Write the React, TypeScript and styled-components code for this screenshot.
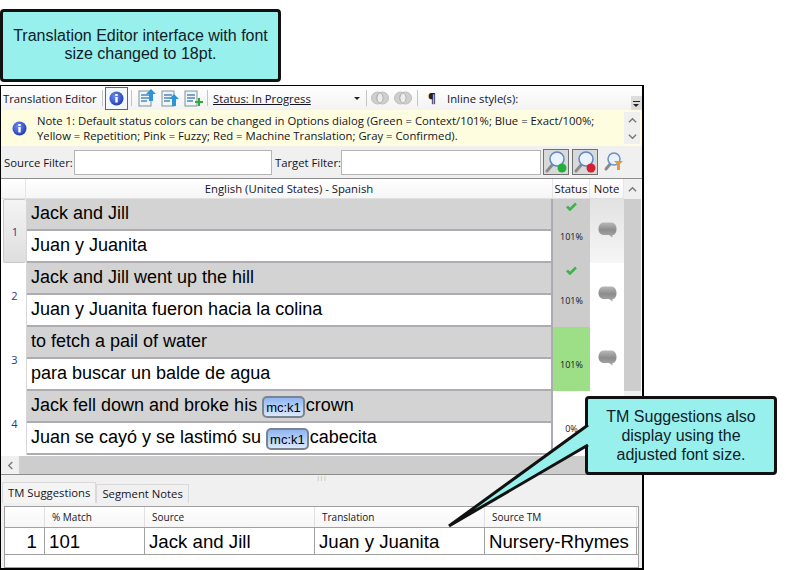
import React from "react";
import styled, { createGlobalStyle } from "styled-components";

const Global = createGlobalStyle`
  html, body { margin: 0; padding: 0; background: #fff; }
  body { font-family: "Open Sans", "Liberation Sans", sans-serif; color: #14141f; }
`;

const Page = styled.div`
  position: relative;
  width: 786px;
  height: 570px;
  overflow: hidden;
  padding-top: 9px;
  box-sizing: border-box;
`;

const Callout = styled.div`
  background: #98f0ec;
  border: 3px solid #111;
  border-radius: 4px;
  box-sizing: border-box;
  font-family: "Liberation Sans", Arial, sans-serif;
  font-size: 16px;
  color: #10202a;
  text-align: center;
  display: flex;
  align-items: center;
  justify-content: center;
`;

const TopCallout = styled(Callout)`
  width: 281px;
  height: 73px;
  padding: 0 10px 1px;
  line-height: 18px;
`;

const SideCallout = styled(Callout)`
  position: absolute;
  left: 585px;
  top: 396px;
  width: 192px;
  height: 79px;
  padding: 0 12px;
  line-height: 19px;
  z-index: 3;
`;

const Tail = styled.svg`
  position: absolute;
  left: 0;
  top: 0;
  z-index: 4;
  pointer-events: none;
`;

const Window = styled.div`
  width: 644px;
  height: 485px;
  margin-top: 3px;
  border: 1px solid #000;
  border-width: 1px 2px 2px 1px;
  box-sizing: border-box;
  background: #f0f0f0;
  display: flex;
  flex-direction: column;
`;

const Toolbar = styled.div`
  height: 24px;
  flex: none;
  background: linear-gradient(#ffffff, #f3f3f3);
  display: flex;
  align-items: center;
  font-size: 11.3px;
  padding-left: 2px;
  position: relative;
`;

const ToolLabel = styled.span`
  width: 97px;
  white-space: nowrap;
`;

const Sep = styled.i<{ $gap?: number }>`
  width: 1px;
  height: 16px;
  background: #c4c4c4;
  margin: 0 ${(p) => p.$gap ?? 4}px;
  flex: none;
`;

const InfoButton = styled.span`
  width: 23px;
  height: 23px;
  border: 1px solid #1a78c8;
  background: #f4f8fc;
  box-sizing: border-box;
  display: flex;
  align-items: center;
  justify-content: center;
  flex: none;
`;

const ToolIcon = styled.span`
  width: 23px;
  height: 20px;
  display: flex;
  align-items: center;
  justify-content: center;
  flex: none;
`;

const StatusPick = styled.span`
  width: 151px;
  display: flex;
  justify-content: space-between;
  align-items: center;
  padding: 0 2px;
  font-size: 11.3px;
  text-decoration: underline;
  box-sizing: border-box;
  white-space: nowrap;
  &::after {
    content: "";
    border: 3px solid transparent;
    border-top: 3px solid #222;
    margin-top: 3px;
  }
`;

const RingGroup = styled.span`
  display: flex;
  gap: 5px;
`;

const Pilcrow = styled.span`
  width: 18px;
  margin: 0 6px 0 0;
  text-align: center;
  font-size: 12px;
  font-weight: 700;
  color: #222;
`;

const Overflow = styled.span`
  position: absolute;
  right: 0;
  top: 10px;
  width: 11px;
  height: 14px;
  background: #dcdcdc;
  &::before {
    content: "";
    position: absolute;
    left: 2px;
    top: 5px;
    width: 7px;
    height: 1px;
    background: #222;
  }
  &::after {
    content: "";
    position: absolute;
    left: 2px;
    top: 8px;
    border: 3.5px solid transparent;
    border-top: 3.5px solid #222;
  }
`;

const NoteBar = styled.div`
  height: 36px;
  flex: none;
  background: #fefde0;
  display: flex;
  font-size: 11.3px;
  line-height: 15px;
`;

const NoteIcon = styled.span`
  width: 36px;
  flex: none;
  display: flex;
  justify-content: center;
  padding-top: 11px;
  box-sizing: border-box;
`;

const NoteText = styled.div`
  flex: 1;
  padding-top: 3px;
  white-space: nowrap;
`;

const NoteScroll = styled.div`
  width: 16px;
  height: 32px;
  margin: 2px 2px 0 0;
  flex: none;
  background: #f0f0f0;
  display: flex;
  flex-direction: column;
  align-items: center;
  justify-content: space-around;
`;

const FilterBar = styled.div`
  height: 33px;
  flex: none;
  display: flex;
  align-items: center;
  font-size: 11.3px;
  padding-left: 3px;
  border-bottom: 1px solid #8d8d8d;
  box-sizing: border-box;
`;

const FilterLabel = styled.span<{ $w: number }>`
  width: ${(p) => p.$w}px;
  flex: none;
  white-space: nowrap;
`;

const FilterInput = styled.span<{ $w: number }>`
  width: ${(p) => p.$w}px;
  height: 25px;
  border: 1px solid #b5b5b5;
  background: #fff;
  box-sizing: border-box;
  flex: none;
`;

const SearchBtn = styled.span<{ $gap: number }>`
  width: 26px;
  height: 26px;
  background: #d9d9d9;
  border: 1px solid #707070;
  box-sizing: border-box;
  margin-left: ${(p) => p.$gap}px;
  display: flex;
  align-items: center;
  justify-content: center;
  flex: none;
`;

const FilterIcon = styled(ToolIcon)`
  margin-left: 4px;
`;

const GridWrap = styled.div`
  flex: none;
  display: flex;
  background: #fff;
  height: 277px;
`;

const GridBody = styled.div`
  width: 623px;
  flex: none;
  display: flex;
  flex-direction: column;
`;

const HeadRow = styled.div`
  display: grid;
  grid-template-columns: 25px 527px 37px 34px;
  height: 20px;
  font-size: 11.3px;
  line-height: 19px;
  text-align: center;
  background: linear-gradient(#ffffff, #f6f6f6);
  border-bottom: 1px solid #e0e0e0;
  box-sizing: border-box;
`;

const HeadCell = styled.div`
  border-right: 1px solid #e6e6e6;
  white-space: nowrap;
`;

const SegRow = styled.div`
  display: grid;
  grid-template-columns: 25px 527px 37px 34px;
  height: 64px;
`;

const RowNum = styled.div<{ $active?: boolean }>`
  display: flex;
  align-items: center;
  justify-content: center;
  font-size: 11px;
  color: #1f3a8a;
  box-sizing: border-box;
  margin-left: 2px;
  ${(p) =>
    p.$active &&
    `background: linear-gradient(#f4f4f4, #dedede);
     border: 1px solid #c8c8c8;
     border-right: 0;
     border-radius: 2px;`}
`;

const Texts = styled.div`
  display: flex;
  flex-direction: column;
  border-left: 1px solid #d6d6d6;
`;

const Seg = styled.div<{ $source?: boolean }>`
  height: 32px;
  box-sizing: border-box;
  padding-left: 4px;
  font-family: "Liberation Sans", Arial, sans-serif;
  font-size: 18px;
  line-height: 29px;
  color: #000;
  background: ${(p) => (p.$source ? "#d3d3d3" : "#fff")};
  border-bottom: 2px solid #aeacb2;
  border-right: 2px solid #aeacb2;
  white-space: nowrap;
`;

const Tag = styled.span`
  display: inline-block;
  height: 22px;
  line-height: 19px;
  padding: 0 2px;
  margin: 0 1px 0 0;
  vertical-align: -1px;
  font-size: 13px;
  border: 2px solid #7a8492;
  border-radius: 5px;
  box-sizing: border-box;
  background: linear-gradient(#8fb7f2, #dbe8fb);
`;

const StatusCell = styled.div<{ $bg: string }>`
  background: ${(p) => p.$bg};
  position: relative;
  display: flex;
  align-items: center;
  justify-content: center;
  padding-top: 10px;
  box-sizing: border-box;
  font-size: 9px;
`;

const Check = styled.svg`
  position: absolute;
  left: 13px;
  top: 3px;
`;

const NoteCell = styled.div<{ $active?: boolean }>`
  display: flex;
  align-items: center;
  justify-content: center;
  padding-bottom: 2px;
  box-sizing: border-box;
  background: ${(p) => (p.$active ? "linear-gradient(#e2e2e2, #f6f6f6)" : "#fff")};
`;

const VScroll = styled.div`
  width: 17px;
  flex: none;
  background: #f0f0f0;
  display: flex;
  flex-direction: column;
`;

const ScrollBtn = styled.div`
  height: 20px;
  flex: none;
  display: flex;
  align-items: center;
  justify-content: center;
`;

const VThumb = styled.div`
  height: 192px;
  background: #cdcdcd;
`;

const HScroll = styled.div`
  height: 18px;
  flex: none;
  display: flex;
  background: #cdcdcd;
  border-bottom: 1px solid #8d8d8d;
`;

const HLeft = styled.div`
  width: 18px;
  background: #f0f0f0;
  display: flex;
  align-items: center;
  justify-content: center;
`;

const Splitter = styled.div`
  height: 7px;
  flex: none;
  display: flex;
  justify-content: center;
  font-size: 6px;
  line-height: 6px;
  color: #999;
`;

const Tabs = styled.div`
  height: 21px;
  flex: none;
  display: flex;
  align-items: flex-end;
  padding-left: 1px;
  font-size: 11.3px;
`;

const Tab = styled.div<{ $active?: boolean }>`
  height: ${(p) => (p.$active ? 21 : 19)}px;
  line-height: ${(p) => (p.$active ? 19 : 18)}px;
  padding: 0 5px;
  box-sizing: border-box;
  background: ${(p) => (p.$active ? "#f4f4f4" : "#f0f0f0")};
  border: 1px solid #d9d9d9;
  border-bottom: 0;
  white-space: nowrap;
`;

const Suggestions = styled.div`
  flex: 1;
  margin: 3px 3px 0 3px;
  border: 1px solid #a0a0a0;
  background: #fff;
`;

const SugHead = styled.div`
  display: grid;
  grid-template-columns: 40px 100px 170px 170px 152px;
  height: 21px;
  font-size: 10px;
  line-height: 20px;
  border-bottom: 1px solid #a0a0a0;
  box-sizing: border-box;
  background: linear-gradient(#ffffff, #f6f6f6);
`;

const SugHeadCell = styled.div`
  padding-left: 7px;
  border-right: 1px solid #e0e0e0;
`;

const SugRow = styled.div`
  display: grid;
  grid-template-columns: 40px 100px 170px 170px 152px;
  height: 27px;
  font-family: "Liberation Sans", Arial, sans-serif;
  font-size: 18.67px;
  line-height: 27px;
  color: #000;
  border-bottom: 1px solid #a0a0a0;
  box-sizing: border-box;
`;

const SugCell = styled.div<{ $num?: boolean }>`
  padding: ${(p) => (p.$num ? "0 7px 0 0" : "0 0 0 4px")};
  text-align: ${(p) => (p.$num ? "right" : "left")};
  border-right: 1px solid #a0a0a0;
  white-space: nowrap;
  overflow: hidden;
`;

const InfoGlyph = () => (
  <svg width="15" height="15" viewBox="0 0 15 15">
    <defs>
      <radialGradient id="infoFill" cx="40%" cy="35%" r="70%">
        <stop offset="0" stopColor="#6f8ff0" />
        <stop offset="1" stopColor="#2036b0" />
      </radialGradient>
    </defs>
    <circle cx="7.5" cy="7.5" r="7" fill="url(#infoFill)" />
    <rect x="6.3" y="3" width="2.4" height="2" fill="#fff" />
    <rect x="6.3" y="6" width="2.4" height="5.5" fill="#fff" />
  </svg>
);

const Sheet = ({ children }: { children?: React.ReactNode }) => (
  <svg width="20" height="20" viewBox="0 0 20 20">
    <rect x="2" y="3" width="12" height="15" fill="#f2f5f5" stroke="#7f9393" />
    <path d="M4 7h8M4 10h8M4 13h6" stroke="#4f88c8" strokeWidth="1.5" />
    {children}
  </svg>
);

const UpArrow = () => <path d="M14 1l5 5h-3v7h-4V6H9z" fill="#2b95d8" />;

const Bubble = () => (
  <svg width="19" height="16" viewBox="0 0 19 16">
    <defs>
      <linearGradient id="bubbleFill" x1="0" y1="0" x2="0" y2="1">
        <stop offset="0" stopColor="#b8b8b8" />
        <stop offset="0.5" stopColor="#8c8c8c" />
        <stop offset="1" stopColor="#acacac" />
      </linearGradient>
    </defs>
    <path
      d="M6 0.5h7c3.300 0 5.500 2.500 5.500 6.500S16.500 13 14.500 13v2.500L11 13H6C2.700 13 0.500 10.800 0.500 7S2.700 0.500 6 0.500z"
      fill="url(#bubbleFill)"
    />
  </svg>
);

const Tick = () => (
  <Check width="11" height="9" viewBox="0 0 11 9">
    <path d="M1 4.500l3 3 6-6" fill="none" stroke="#3cb44a" strokeWidth="2.600" />
  </Check>
);

const Lens = ({ dot }: { dot?: string }) => (
  <svg width="24" height="24" viewBox="0 0 24 24">
    <path d="M9 14l-6 7" stroke="#8a8a8a" strokeWidth="3" strokeLinecap="round" />
    <circle cx="13" cy="9" r="7" fill="#eaf3fb" stroke="#5c86c6" strokeWidth="1.500" />
    {dot && <circle cx="18" cy="18" r="4.500" fill={dot} />}
  </svg>
);

const Rings = () => (
  <svg width="18" height="14" viewBox="0 0 18 14">
    <circle cx="6.500" cy="7" r="6" fill="#cfcfcf" stroke="#bdbdbd" />
    <circle cx="11.500" cy="7" r="6" fill="#cfcfcf" stroke="#bdbdbd" />
    <path d="M9 1.700a6 6 0 0 1 0 10.600a6 6 0 0 1 0-10.600z" fill="#ededed" stroke="#b0b0b0" />
  </svg>
);

const Chevron = ({ d, size = 9 }: { d: string; size?: number }) => (
  <svg width={size} height={size} viewBox="0 0 10 10">
    <path d={d} fill="none" stroke="#777" strokeWidth="1.500" />
  </svg>
);

const rows = [
  { n: 1, source: <>Jack and Jill</>, target: <>Juan y Juanita</>, pct: "101%", bg: "#cccccc", tick: true, note: true, active: true },
  { n: 2, source: <>Jack and Jill went up the hill</>, target: <>Juan y Juanita fueron hacia la colina</>, pct: "101%", bg: "#cccccc", tick: true, note: true },
  { n: 3, source: <>to fetch a pail of water</>, target: <>para buscar un balde de agua</>, pct: "101%", bg: "#9ddf87", note: true },
  {
    n: 4,
    source: <>Jack fell down and broke his <Tag>mc:k1</Tag>crown</>,
    target: <>Juan se cayó y se lastimó su <Tag>mc:k1</Tag>cabecita</>,
    pct: "0%",
    bg: "#ffffff",
  },
];

export default function App() {
  return (
    <Page>
      <Global />
      <TopCallout>Translation Editor interface with font size changed to 18pt.</TopCallout>
      <Window>
        <Toolbar>
          <ToolLabel>Translation Editor</ToolLabel>
          <Sep $gap={2} />
          <InfoButton>
            <InfoGlyph />
          </InfoButton>
          <Sep $gap={3} />
          <ToolIcon>
            <Sheet>
              <UpArrow />
            </Sheet>
          </ToolIcon>
          <ToolIcon>
            <Sheet>
              <path d="M14 6l5 5h-3v7h-4v-7H9z" fill="#2b95d8" />
            </Sheet>
          </ToolIcon>
          <ToolIcon>
            <Sheet>
              <path d="M12 13h3v-3h2v3h3v2h-3v3h-2v-3h-3z" fill="#2eaa3c" />
            </Sheet>
          </ToolIcon>
          <Sep $gap={3} />
          <StatusPick>Status: In Progress</StatusPick>
          <Sep $gap={4} />
          <RingGroup>
            <Rings />
            <Rings />
          </RingGroup>
          <Sep $gap={5} />
          <Pilcrow>¶</Pilcrow>
          <span>Inline style(s):</span>
          <Overflow />
        </Toolbar>
        <NoteBar>
          <NoteIcon>
            <InfoGlyph />
          </NoteIcon>
          <NoteText>
            Note 1: Default status colors can be changed in Options dialog (Green = Context/101%; Blue = Exact/100%;
            <br />
            Yellow = Repetition; Pink = Fuzzy; Red = Machine Translation; Gray = Confirmed).
          </NoteText>
          <NoteScroll>
            <Chevron d="M1 7l4-4 4 4" />
            <Chevron d="M1 3l4 4 4-4" />
          </NoteScroll>
        </NoteBar>
        <FilterBar>
          <FilterLabel $w={70}>Source Filter:</FilterLabel>
          <FilterInput $w={198} />
          <FilterLabel $w={69}>&nbsp;Target Filter:</FilterLabel>
          <FilterInput $w={200} />
          <SearchBtn $gap={2}>
            <Lens dot="#22b03a" />
          </SearchBtn>
          <SearchBtn $gap={3}>
            <Lens dot="#d42030" />
          </SearchBtn>
          <FilterIcon>
            <svg width="22" height="22" viewBox="0 0 22 22">
              <path d="M8 12l-5 6" stroke="#8a8a8a" strokeWidth="3" strokeLinecap="round" />
              <circle cx="11" cy="8" r="6" fill="#eaf3fb" stroke="#6b8fc8" strokeWidth="1.500" />
              <path d="M11 10h9l-3 3v6h-3v-6z" fill="#e8963a" />
            </svg>
          </FilterIcon>
        </FilterBar>
        <GridWrap>
          <GridBody>
            <HeadRow>
              <HeadCell />
              <HeadCell>English (United States) - Spanish</HeadCell>
              <HeadCell>Status</HeadCell>
              <HeadCell>Note</HeadCell>
            </HeadRow>
            {rows.map((r) => (
              <SegRow key={r.n}>
                <RowNum $active={r.active}>{r.n}</RowNum>
                <Texts>
                  <Seg $source>{r.source}</Seg>
                  <Seg>{r.target}</Seg>
                </Texts>
                <StatusCell $bg={r.bg}>
                  {r.tick && <Tick />}
                  {r.pct}
                </StatusCell>
                <NoteCell $active={r.active}>{r.note && <Bubble />}</NoteCell>
              </SegRow>
            ))}
          </GridBody>
          <VScroll>
            <ScrollBtn>
              <Chevron d="M1 7l4-4 4 4" />
            </ScrollBtn>
            <VThumb />
          </VScroll>
        </GridWrap>
        <HScroll>
          <HLeft>
            <Chevron d="M7 1L3 5l4 4" />
          </HLeft>
        </HScroll>
        <Splitter>|||</Splitter>
        <Tabs>
          <Tab $active>TM Suggestions</Tab>
          <Tab>Segment Notes</Tab>
        </Tabs>
        <Suggestions>
          <SugHead>
            <SugHeadCell />
            <SugHeadCell>% Match</SugHeadCell>
            <SugHeadCell>Source</SugHeadCell>
            <SugHeadCell>Translation</SugHeadCell>
            <SugHeadCell>Source TM</SugHeadCell>
          </SugHead>
          <SugRow>
            <SugCell $num>1</SugCell>
            <SugCell>101</SugCell>
            <SugCell>Jack and Jill</SugCell>
            <SugCell>Juan y Juanita</SugCell>
            <SugCell>Nursery-Rhymes</SugCell>
          </SugRow>
        </Suggestions>
      </Window>
      <SideCallout>TM Suggestions also display using the adjusted font size.</SideCallout>
      <Tail width="786" height="570" viewBox="0 0 786 570">
        <path d="M588 425L449 526L588 445" fill="#98f0ec" stroke="#111" strokeWidth="3" strokeLinejoin="miter" />
      </Tail>
    </Page>
  );
}
